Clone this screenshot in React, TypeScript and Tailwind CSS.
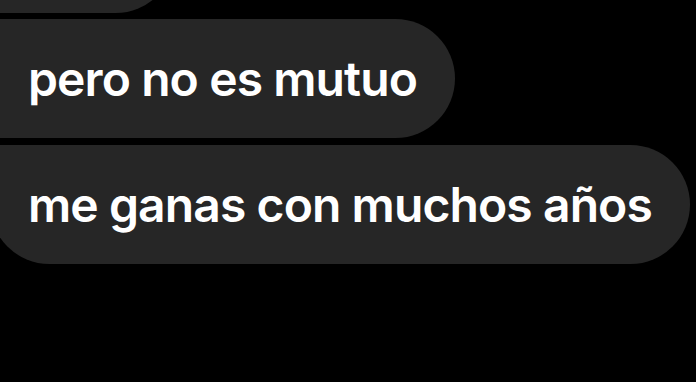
export default function App() {
  const font = { fontFamily: 'Inter, "Noto Sans", sans-serif' };
  return (
    <div className="w-[696px] h-[382px] bg-black overflow-hidden" style={font}>
      <div className="flex flex-col items-start gap-[6px] ml-[-10px] mt-[-106px]">
        <div className="h-[119px] w-[185px] bg-[#262626] rounded-[60px] rounded-tl-[10px] rounded-bl-[10px]" />
        <div className="h-[119px] flex items-center px-[38px] bg-[#262626] rounded-[60px] rounded-tl-[10px] rounded-bl-[10px] text-white text-[48px] font-semibold tracking-[-0.9px]">
          pero no es mutuo
        </div>
        <div className="h-[119px] mt-[1px] flex items-center px-[38px] bg-[#262626] rounded-[60px] rounded-tl-[10px] text-white text-[48px] font-semibold tracking-[-0.9px]">
          me ganas con muchos años
        </div>
      </div>
    </div>
  );
}
